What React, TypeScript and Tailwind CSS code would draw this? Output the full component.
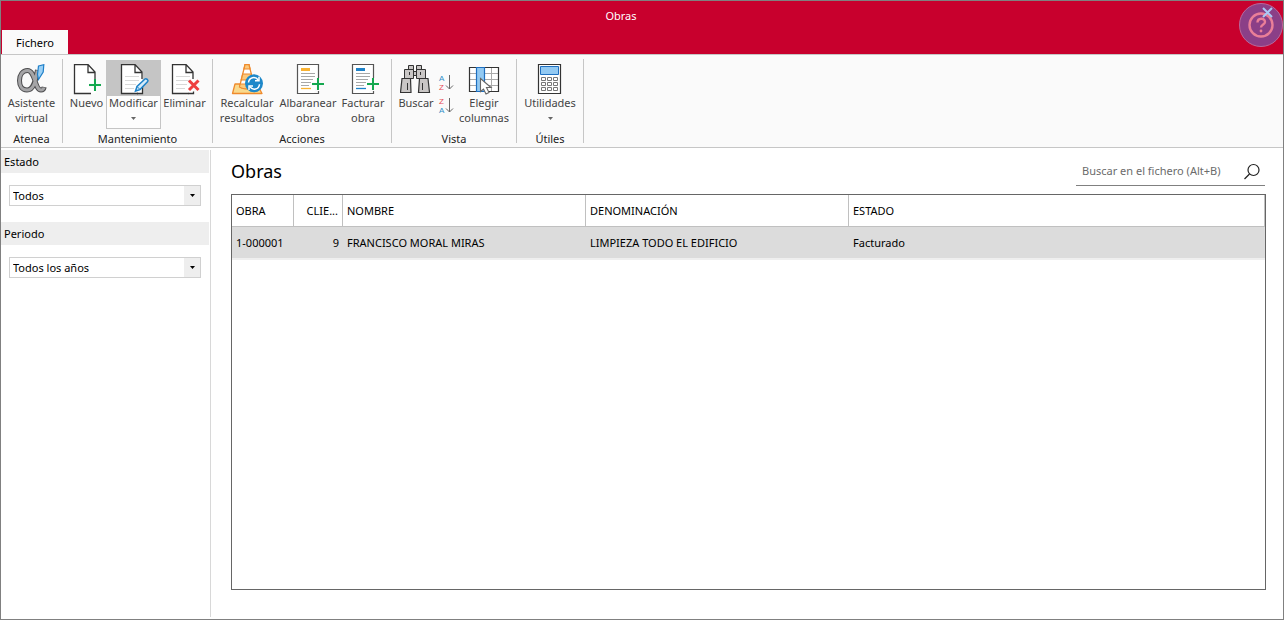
import type { ReactNode } from "react";

function AssistantIcon() {
  return (
    <svg width="33" height="32" viewBox="0 0 33 32" fill="none">
      <path d="M22.500 6c-1.500 8-3 20-10.500 20-5 0-7.500-4-7.500-9.500s3-10 8-10c8 0 7 19.500 13.500 19.500 1.800 0 2.800-1 3.200-3" stroke="#4d4d4f" strokeWidth="5" />
      <path d="M22.300 6.500c-1.500 8-2.800 19.500-10.300 19.500-5 0-7.500-4-7.500-9.500s3-10 8-10c8 0 7 19.500 13.500 19.500 1.800 0 2.600-.8 3-2.500" stroke="#a5a5a7" strokeWidth="3" />
      <path d="m23.500 2 5.300-1.300-.6 7.300-4.700 7.500-1-5z" fill="#9bd0f5" stroke="#1e7fc8" strokeWidth="1.200" />
    </svg>
  );
}

function Sheet({ lines }: { lines?: boolean }) {
  return (
    <>
      <path d="M4.500.5h14l7 7.500V29.500h-21z" fill="#fff" />
      <path d="M21 29.500H4.500V.5h13.500l7 7.500v7M18 .5V8.500h7.500" stroke="#333" strokeWidth="1.300" fill="none" />
      {lines && <path d="M8 12.500h14M8 16.500h14M8 20.500h11M8 24.500h9" stroke="#d8d8d8" />}
    </>
  );
}

function NewIcon() {
  return (
    <svg width="33" height="32" viewBox="0 0 33 32" fill="none">
      <Sheet />
      <path d="M25 15v12M19 21h12" stroke="#fafafa" strokeWidth="4" />
      <path d="M25 15v12M19 21h12" stroke="#14a84f" strokeWidth="2" />
    </svg>
  );
}

function EditIcon() {
  return (
    <svg width="33" height="32" viewBox="0 0 33 32" fill="none">
      <Sheet lines />
      <path d="M25.500 19v10.500H20" stroke="#333" strokeWidth="1.300" />
      <path d="m18.500 27 1.500-4.500 8-7.500c1.200-1 3.800 1.200 2.700 2.600l-7.700 8z" fill="#d6ecfb" stroke="#1e82c8" strokeWidth="1.500" />
      <path d="m20 22.500 3 3" stroke="#1e82c8" />
    </svg>
  );
}

function DeleteIcon() {
  return (
    <svg width="33" height="32" viewBox="0 0 33 32" fill="none">
      <Sheet lines />
      <path d="m21 16.500 9.500 9.500M30.500 16.500 21 26" stroke="#fafafa" strokeWidth="5" />
      <path d="m21 16.500 9.500 9.500M30.500 16.500 21 26" stroke="#ee3f3f" strokeWidth="3" />
      <path d="M20.500 29.500h5v-2" stroke="#333" strokeWidth="1.300" />
    </svg>
  );
}

function RecalcIcon() {
  return (
    <svg width="32" height="32" viewBox="0 0 32 32" fill="none">
      <path d="M4 20h22l5 9.500H1.500z" fill="#f9d98c" stroke="#ef8a2c" strokeWidth="1.300" strokeLinejoin="round" />
      <path d="M14 .7h4L23.500 23c-3.500 2.500-11.500 2.500-15 0z" fill="#fff" stroke="#ef8a2c" strokeWidth="1.300" />
      <path d="M14 .7h4l1 4.300h-6zM11.700 10h8.600l1.300 6H10.200z" fill="#fbc97c" stroke="#ef8a2c" strokeWidth="1.200" />
      <path d="M9.200 20h13.500l.8 3c-3.500 2.500-11.500 2.500-15 0z" fill="#fbc97c" stroke="#ef8a2c" />
      <circle cx="23" cy="19.300" r="9" fill="#1e88c9" />
      <path d="M17.500 18.500c.5-5.500 7-6.500 9.700-2.500M28.500 20.200c-.5 5.500-7 6.500-9.700 2.500" stroke="#fff" strokeWidth="1.500" />
      <path d="M28 12.800v4h-4M18 26v-4h4" stroke="#fff" strokeWidth="1.500" />
    </svg>
  );
}

function DocumentIcon({ accent }: { accent: string }) {
  return (
    <svg width="32" height="32" viewBox="0 0 32 32" fill="none">
      <path d="M22 29.500H5.500V.5h21V14" fill="#fff" stroke="#555" strokeWidth="1.200" />
      <path d="M9 4h9v3H9z" fill={accent} />
      <path d="M9 9.500h14M9 12.500h14M9 15.500h12M9 18.500h10M9 21.500h8" stroke="#a8a8a8" />
      <path d="M9 24.500h10" stroke={accent} strokeWidth="1.300" />
      <path d="M26 14v12M20 20h12M26.500 26.500v3" stroke="#fafafa" strokeWidth="4" />
      <path d="M22 29.500h4.500V27" stroke="#555" strokeWidth="1.200" />
      <path d="M26 14v12M20 20h12" stroke="#14a84f" strokeWidth="2" />
    </svg>
  );
}

function BinocularsIcon() {
  return (
    <svg width="32" height="32" viewBox="0 0 32 32" stroke="#333" fill="#c9c6c5">
      <path d="M8.500 1.500h5v4h-5zM16.500 1.500h5v4h-5zM4.500 5.500h9v9h-9zM16.500 5.500h9v9h-9zM13.500 7.500h3v4h-3z" />
      <path d="M2 14.500h8.500l.5 14H.5zM19.500 14.500H28l1.500 14h-11z" strokeWidth="1.200" />
      <path d="M7.500 19v7M22.500 19v7M9.500 8v3M20.500 8v3" />
    </svg>
  );
}

function SortIcon({ top, bottom }: { top: "A" | "Z"; bottom: "A" | "Z" }) {
  return (
    <svg width="16" height="20" viewBox="0 0 16 20" fontFamily="Liberation Sans, sans-serif" fontSize="8">
      <text x="1" y="8" fill={top === "A" ? "#2f8fc8" : "#e84c58"}>{top}</text>
      <text x="1" y="17" fill={bottom === "A" ? "#2f8fc8" : "#e84c58"}>{bottom}</text>
      <path d="M11.500 2v14M8 12.500l3.500 3.500 3.500-3.500" fill="none" stroke="#666" />
    </svg>
  );
}

function ColumnsIcon() {
  return (
    <svg width="32" height="32" viewBox="0 0 32 32" fill="none">
      <path d="M1.500 3.500h29v24h-29z" fill="#fff" />
      <path d="M2 9.500h28M2 15.500h28M2 21.500h28M23.500 4v23" stroke="#aaa" />
      <path d="M1.500 3.500h29v24h-29z" stroke="#333" strokeWidth="1.200" />
      <path d="M8.500 3.500h8v24h-8z" fill="#92c9f2" stroke="#1e6fc0" strokeWidth="1.200" />
      <path d="M12.500 14.500v13l3-2.500 2.500 5 3-1.500-2.500-5h4.500z" fill="#fff" stroke="#666" strokeWidth="1.100" />
    </svg>
  );
}

function CalculatorIcon() {
  return (
    <svg width="32" height="32" viewBox="0 0 32 32" fill="#fff">
      <path d="M4.500.5h22v29h-22z" stroke="#333" strokeWidth="1.200" />
      <path d="M6.500 2.500h18v8h-18z" fill="#92c9f2" stroke="#1e6fc0" />
      <path
        d="M7.500 13.500h4v3h-4zM13.500 13.500h4v3h-4zM19.500 13.500h4v3h-4zM7.500 18.500h4v3h-4zM13.500 18.500h4v3h-4zM19.500 18.500h4v3h-4zM7.500 23.500h4v3h-4zM13.500 23.500h4v3h-4zM19.500 23.500h4v3h-4z"
        stroke="#777"
      />
    </svg>
  );
}

function Caret({ className }: { className: string }) {
  return (
    <svg width="5" height="3" viewBox="0 0 5 3" className={className}>
      <path d="M0 0h5L2.500 3z" fill="currentColor" />
    </svg>
  );
}

function RibbonGroup({ title, children }: { title: string; children: ReactNode }) {
  return (
    <section className="flex">
      <div className="px-1 pt-[5px]">
        <div className="flex h-[69px]">{children}</div>
        <h2 className="pt-0.5 text-center leading-4 text-[#222]">{title}</h2>
      </div>
      <div className="mt-1 h-[84px] w-px bg-[#c6c6c6]" />
    </section>
  );
}

type RibbonButtonProps = {
  width: string;
  icon: ReactNode;
  children: ReactNode;
  menu?: boolean;
  active?: boolean;
};

function RibbonButton({ width, icon, children, menu, active }: RibbonButtonProps) {
  return (
    <button className={`flex flex-col items-center whitespace-nowrap text-[#444] ${width} ${active ? "border border-t-0 border-[#c5c5c5] bg-[#fdfdfd]" : ""}`}>
      <span className={`flex h-9 justify-center self-stretch pt-1 ${active ? "bg-[#c5c5c5]" : ""}`}>{icon}</span>
      <span className="-mt-px leading-[15px]">{children}</span>
      {menu && <Caret className="mt-[7px] text-[#666]" />}
    </button>
  );
}

function Filter({ id, label, value }: { id: string; label: string; value: string }) {
  return (
    <div className="mb-4">
      <label htmlFor={id} className="mr-px block h-[23px] bg-[#eee] pl-[3px] leading-[23px]">
        {label}
      </label>
      <div className="relative mt-3 mr-[9px] ml-2">
        <select id={id} className="block h-[21px] w-full appearance-none border border-[#d0d0d0] bg-white pl-[3px] leading-[19px]">
          <option>{value}</option>
        </select>
        <span className="pointer-events-none absolute inset-y-px right-px flex w-4 items-center justify-center bg-[#eee]">
          <Caret className="text-black" />
        </span>
      </div>
    </div>
  );
}

const works = [
  { code: "1-000001", client: 9, name: "FRANCISCO MORAL MIRAS", description: "LIMPIEZA TODO EL EDIFICIO", status: "Facturado" },
];

export default function App() {
  return (
    <div className="flex min-h-screen flex-col border border-[#808080] bg-white font-['Noto_Sans',sans-serif] text-[11px] text-black">
      <header className="relative flex h-[53px] flex-col justify-between bg-[#c8002d]">
        <h1 className="pt-[7px] pr-[42px] text-center leading-4 text-white">Obras</h1>
        <button className="ml-px h-6 w-[66px] self-start bg-[#fafafa] pt-0.5">Fichero</button>
        <button aria-label="Ayuda" className="absolute top-0.5 right-0 rounded-full">
          <svg width="44" height="44" viewBox="0 0 44 44" fill="none">
            <circle cx="22" cy="22" r="21.500" fill="#8b3f87" stroke="#b76a9c" />
            <circle cx="22" cy="22" r="11.500" stroke="#ea7f98" strokeWidth="2.400" />
            <path d="M18.500 19.500c0-5 7.500-5 7.500-.5 0 2.500-4 2.500-4 5.500" stroke="#ea7f98" strokeWidth="2.400" />
            <circle cx="22" cy="28" r="1.400" fill="#ea7f98" />
          </svg>
        </button>
        <button aria-label="Cerrar" className="absolute top-1.5 right-2.5">
          <svg width="11" height="11" viewBox="0 0 11 11">
            <path d="m1 1 9 9M10 1l-9 9" stroke="#a9c8f5" strokeWidth="2" />
          </svg>
        </button>
      </header>

      <nav className="flex h-[94px] border-t border-b border-[#c6c6c6] bg-[#fafafa]">
        <RibbonGroup title="Atenea">
          <RibbonButton width="w-[53px]" icon={<AssistantIcon />}>Asistente<br />virtual</RibbonButton>
        </RibbonGroup>
        <RibbonGroup title="Mantenimiento">
          <RibbonButton width="w-[39px]" icon={<NewIcon />}>Nuevo</RibbonButton>
          <RibbonButton width="w-[55px]" icon={<EditIcon />} menu active>Modificar</RibbonButton>
          <RibbonButton width="w-[47px]" icon={<DeleteIcon />}>Eliminar</RibbonButton>
        </RibbonGroup>
        <RibbonGroup title="Acciones">
          <RibbonButton width="w-[60px]" icon={<RecalcIcon />}>Recalcular<br />resultados</RibbonButton>
          <RibbonButton width="w-[62px]" icon={<DocumentIcon accent="#f9b233" />}>Albaranear<br />obra</RibbonButton>
          <RibbonButton width="w-[48px]" icon={<DocumentIcon accent="#1e82c8" />}>Facturar<br />obra</RibbonButton>
        </RibbonGroup>
        <RibbonGroup title="Vista">
          <RibbonButton width="w-[40px]" icon={<BinocularsIcon />}>Buscar</RibbonButton>
          <div className="flex w-5 flex-col items-center gap-[3px] pt-[13px]">
            <button aria-label="Orden ascendente"><SortIcon top="A" bottom="Z" /></button>
            <button aria-label="Orden descendente"><SortIcon top="Z" bottom="A" /></button>
          </div>
          <RibbonButton width="w-[56px]" icon={<ColumnsIcon />}>Elegir<br />columnas</RibbonButton>
        </RibbonGroup>
        <RibbonGroup title="Útiles">
          <RibbonButton width="w-[58px]" icon={<CalculatorIcon />} menu>Utilidades</RibbonButton>
        </RibbonGroup>
      </nav>

      <div className="flex flex-1 pt-0.5 pb-0.5">
        <aside className="w-[210px] shrink-0 border-r border-[#d8d8d8]">
          <Filter id="estado" label="Estado" value="Todos" />
          <Filter id="periodo" label="Periodo" value="Todos los años" />
        </aside>

        <main className="flex flex-1 flex-col pt-1.5 pr-[17px] pb-[27px] pl-5">
          <div className="mb-2 flex items-end justify-between">
            <h2 className="pb-px text-lg">Obras</h2>
            <div className="mr-px flex h-[30px] w-[189px] items-center border-b border-[#808080]">
              <input
                type="text"
                aria-label="Buscar en el fichero"
                placeholder="Buscar en el fichero (Alt+B)"
                className="min-w-0 flex-1 pt-0.5 pl-1.5 outline-none placeholder:text-[#6b6b6b]"
              />
              <button aria-label="Buscar" className="pt-0.5 pr-1">
                <svg width="18" height="18" viewBox="0 0 18 18" fill="none" stroke="#222" strokeWidth="1.200">
                  <circle cx="10.500" cy="7" r="5.500" />
                  <path d="M6.500 11 1.500 16" />
                </svg>
              </button>
            </div>
          </div>

          <div className="flex-1 border border-[#666]">
            <table className="w-full table-fixed border-separate border-spacing-0">
              <thead>
                <tr className="text-left *:h-8 *:border-r *:border-b *:border-[#c0c0c0] *:px-1 *:pt-0.5 *:font-normal">
                  <th className="w-[62px]">OBRA</th>
                  <th className="w-[49px] text-right">CLIE...</th>
                  <th className="w-[243px]">NOMBRE</th>
                  <th className="w-[263px]">DENOMINACIÓN</th>
                  <th>ESTADO</th>
                </tr>
              </thead>
              <tbody>
                {works.map((work) => (
                  <tr key={work.code} className="bg-[#dcdcdc] *:h-[33px] *:border-b-2 *:border-[#efefef] *:px-1 *:pt-0.5">
                    <td>{work.code}</td>
                    <td className="text-right">{work.client}</td>
                    <td>{work.name}</td>
                    <td>{work.description}</td>
                    <td>{work.status}</td>
                  </tr>
                ))}
              </tbody>
            </table>
          </div>
        </main>
      </div>
    </div>
  );
}
